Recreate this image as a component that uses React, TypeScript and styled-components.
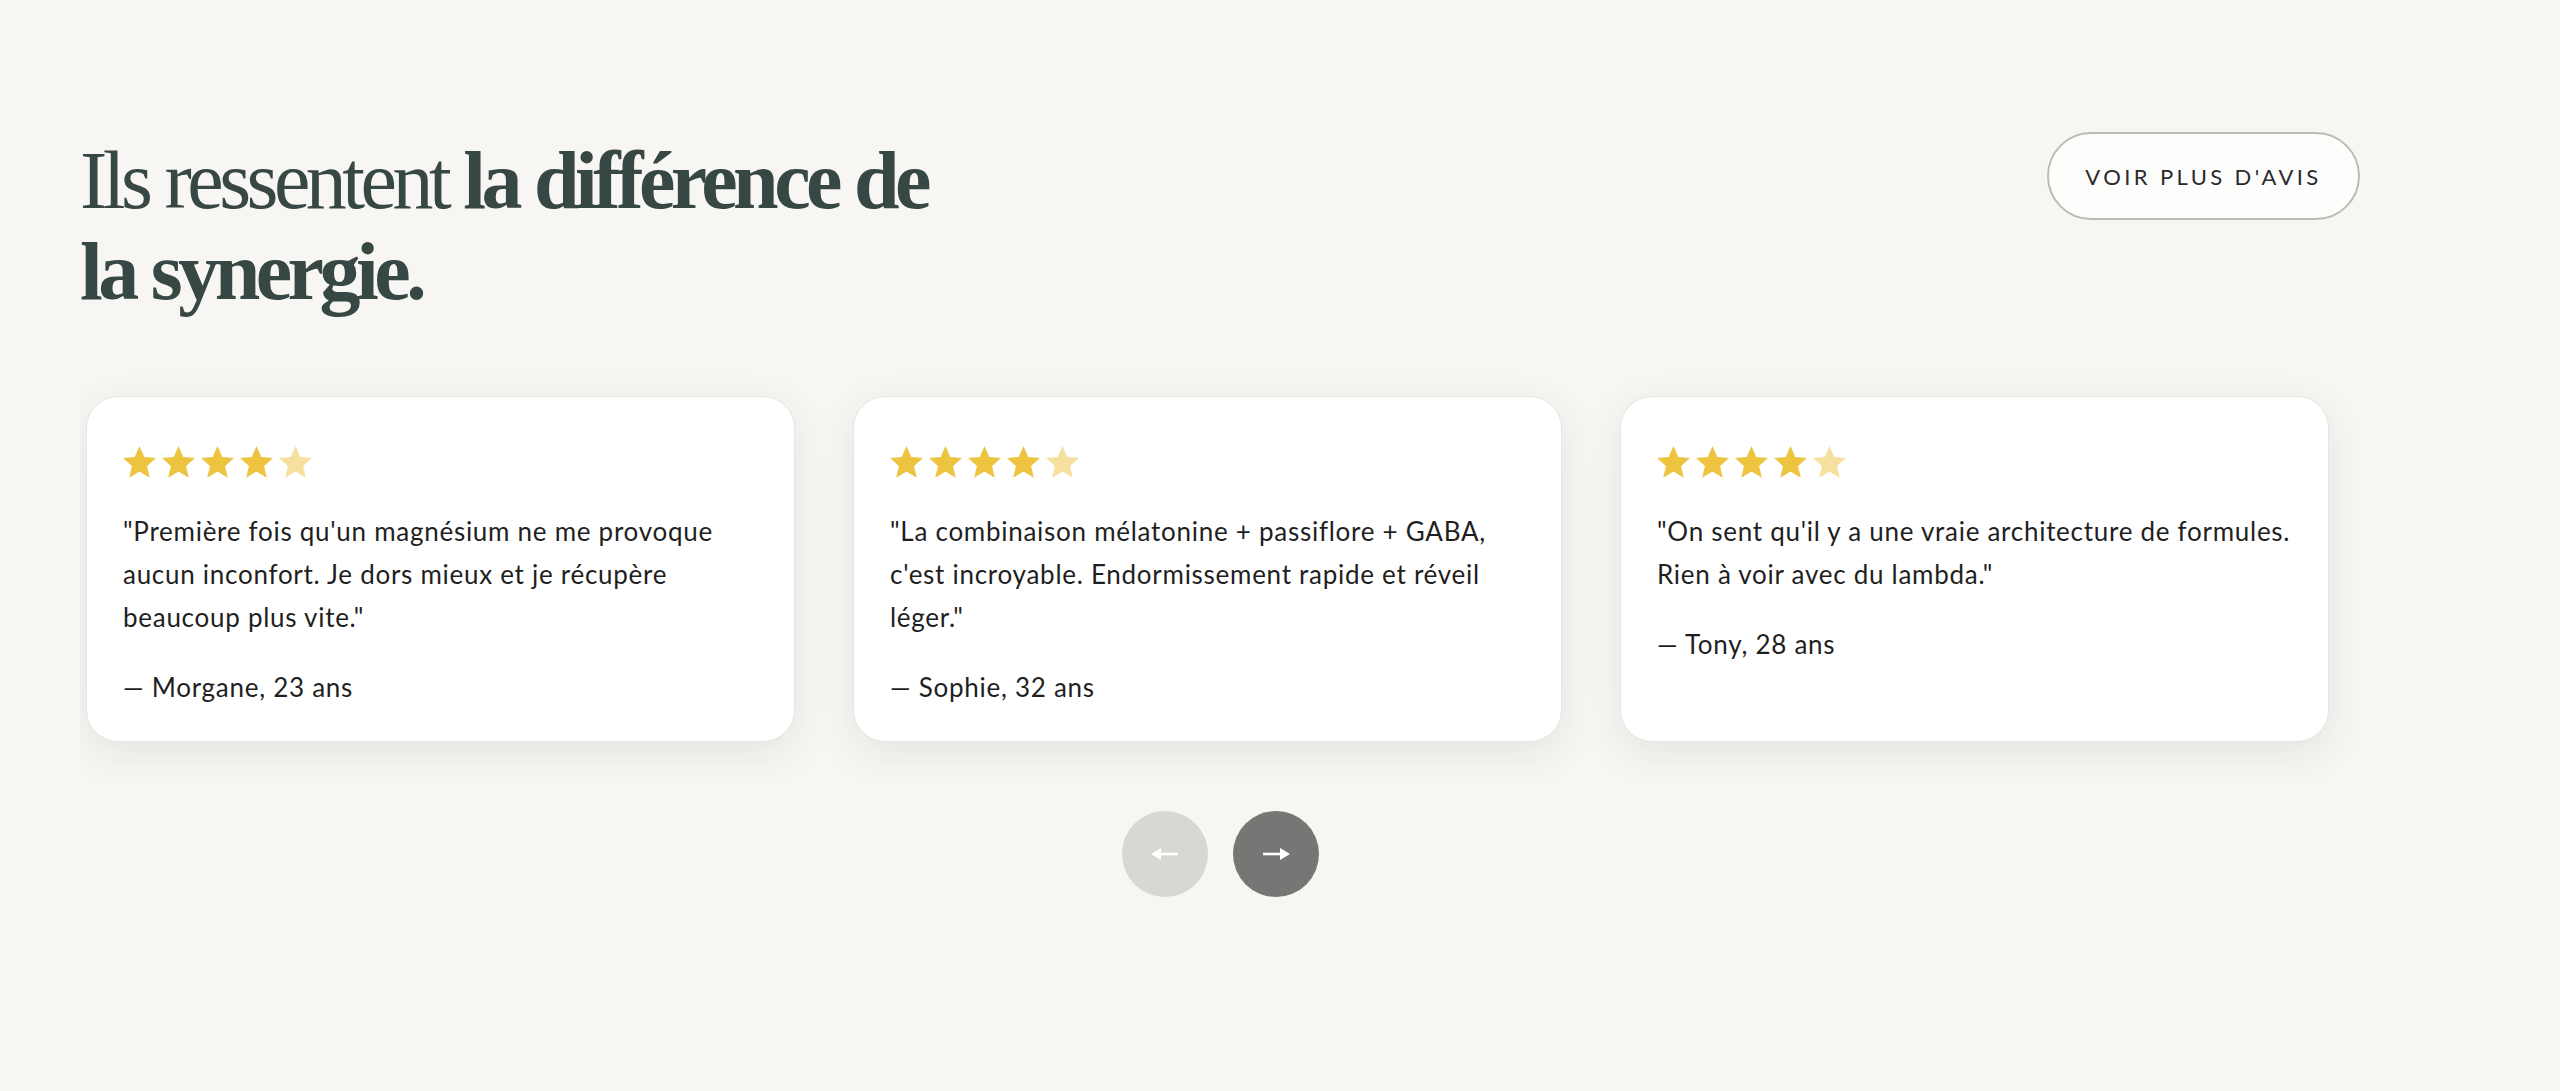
import styled, { createGlobalStyle } from "styled-components";

const GlobalStyle = createGlobalStyle`
  html, body {
    margin: 0;
    padding: 0;
    background: #f7f6f3;
  }
  * {
    box-sizing: border-box;
  }
`;

const Section = styled.section`
  width: 2560px;
  min-height: 1091px;
  padding: 132px 200px 0 80px;
  background: #f7f6f3;
`;

const Header = styled.div`
  display: flex;
  justify-content: space-between;
  align-items: flex-start;
`;

const Title = styled.h1`
  margin: 3px 0 0;
  font-family: "Liberation Serif", "Times New Roman", serif;
  font-size: 82px;
  line-height: 91px;
  font-weight: 400;
  letter-spacing: -0.055em;
  color: #374844;

  strong {
    font-weight: 700;
  }
`;

const MoreButton = styled.button`
  width: 313px;
  height: 88px;
  border: 2px solid #bdbbb6;
  border-radius: 44px;
  background: #fdfdfc;
  font-family: "Lato", "Noto Sans", sans-serif;
  font-size: 22px;
  letter-spacing: 3.4px;
  color: #2b2b2b;
  cursor: pointer;
`;

const Track = styled.div`
  margin-top: 57px;
  display: flex;
  gap: 58px;
  padding: 22px 6px 36px;
  overflow: hidden;
`;

const Card = styled.article`
  flex: 0 0 709px;
  display: flex;
  flex-direction: column;
  padding: 49px 26px 32px 36px;
  background: #ffffff;
  border: 1px solid #e6e5e1;
  border-radius: 32px;
  box-shadow: 0 12px 40px rgba(60, 55, 45, 0.09);
`;

const Stars = styled.div`
  display: flex;
  gap: 6px;
`;

const Quote = styled.p`
  margin: 32px 0 0;
  font-family: "Lato", "Noto Sans", sans-serif;
  font-size: 26px;
  line-height: 43px;
  letter-spacing: 0.028em;
  color: #1f1f1f;
`;

const Author = styled(Quote)`
  margin-top: 27px;
`;

const Nav = styled.div`
  display: flex;
  justify-content: center;
  gap: 25px;
  margin-top: 33px;
`;

const NavButton = styled.button<{ $active?: boolean }>`
  width: 86px;
  height: 86px;
  border: none;
  border-radius: 50%;
  background: ${(p) => (p.$active ? "#787674" : "#d8d7d3")};
  display: flex;
  align-items: center;
  justify-content: center;
  cursor: pointer;
`;

const Star = ({ faded }: { faded?: boolean }) => (
  <svg width="33" height="32" viewBox="2 2 20 19.4">
    <polygon
      points="12,2 14.9,8.6 22,9.3 16.6,14.1 18.2,21.2 12,17.5 5.8,21.2 7.4,14.1 2,9.3 9.1,8.6"
      fill={faded ? "#f5e19d" : "#ecc440"}
    />
  </svg>
);

const Arrow = ({ dir }: { dir: "left" | "right" }) => (
  <svg
    width="28"
    height="16"
    viewBox="0 0 28 16"
    style={{ transform: dir === "left" ? "scaleX(-1)" : undefined }}
  >
    <line x1="1" y1="8" x2="20" y2="8" stroke="#fff" strokeWidth="2.6" />
    <polygon points="18,2 28,8 18,14" fill="#fff" />
  </svg>
);

const reviews = [
  {
    text: "\"Première fois qu'un magnésium ne me provoque aucun inconfort. Je dors mieux et je récupère beaucoup plus vite.\"",
    author: "— Morgane, 23 ans",
  },
  {
    text: "\"La combinaison mélatonine + passiflore + GABA, c'est incroyable. Endormissement rapide et réveil léger.\"",
    author: "— Sophie, 32 ans",
  },
  {
    text: "\"On sent qu'il y a une vraie architecture de formules. Rien à voir avec du lambda.\"",
    author: "— Tony, 28 ans",
  },
];

export default function App() {
  return (
    <>
      <GlobalStyle />
      <Section>
        <Header>
          <Title>
            Ils ressentent <strong>la différence de</strong>
            <br />
            <strong>la synergie.</strong>
          </Title>
          <MoreButton>VOIR PLUS D'AVIS</MoreButton>
        </Header>
        <Track>
          {reviews.map((r) => (
            <Card key={r.author}>
              <Stars>
                <Star />
                <Star />
                <Star />
                <Star />
                <Star faded />
              </Stars>
              <Quote>{r.text}</Quote>
              <Author as="p">{r.author}</Author>
            </Card>
          ))}
        </Track>
        <Nav>
          <NavButton aria-label="Précédent">
            <Arrow dir="left" />
          </NavButton>
          <NavButton $active aria-label="Suivant">
            <Arrow dir="right" />
          </NavButton>
        </Nav>
      </Section>
    </>
  );
}
